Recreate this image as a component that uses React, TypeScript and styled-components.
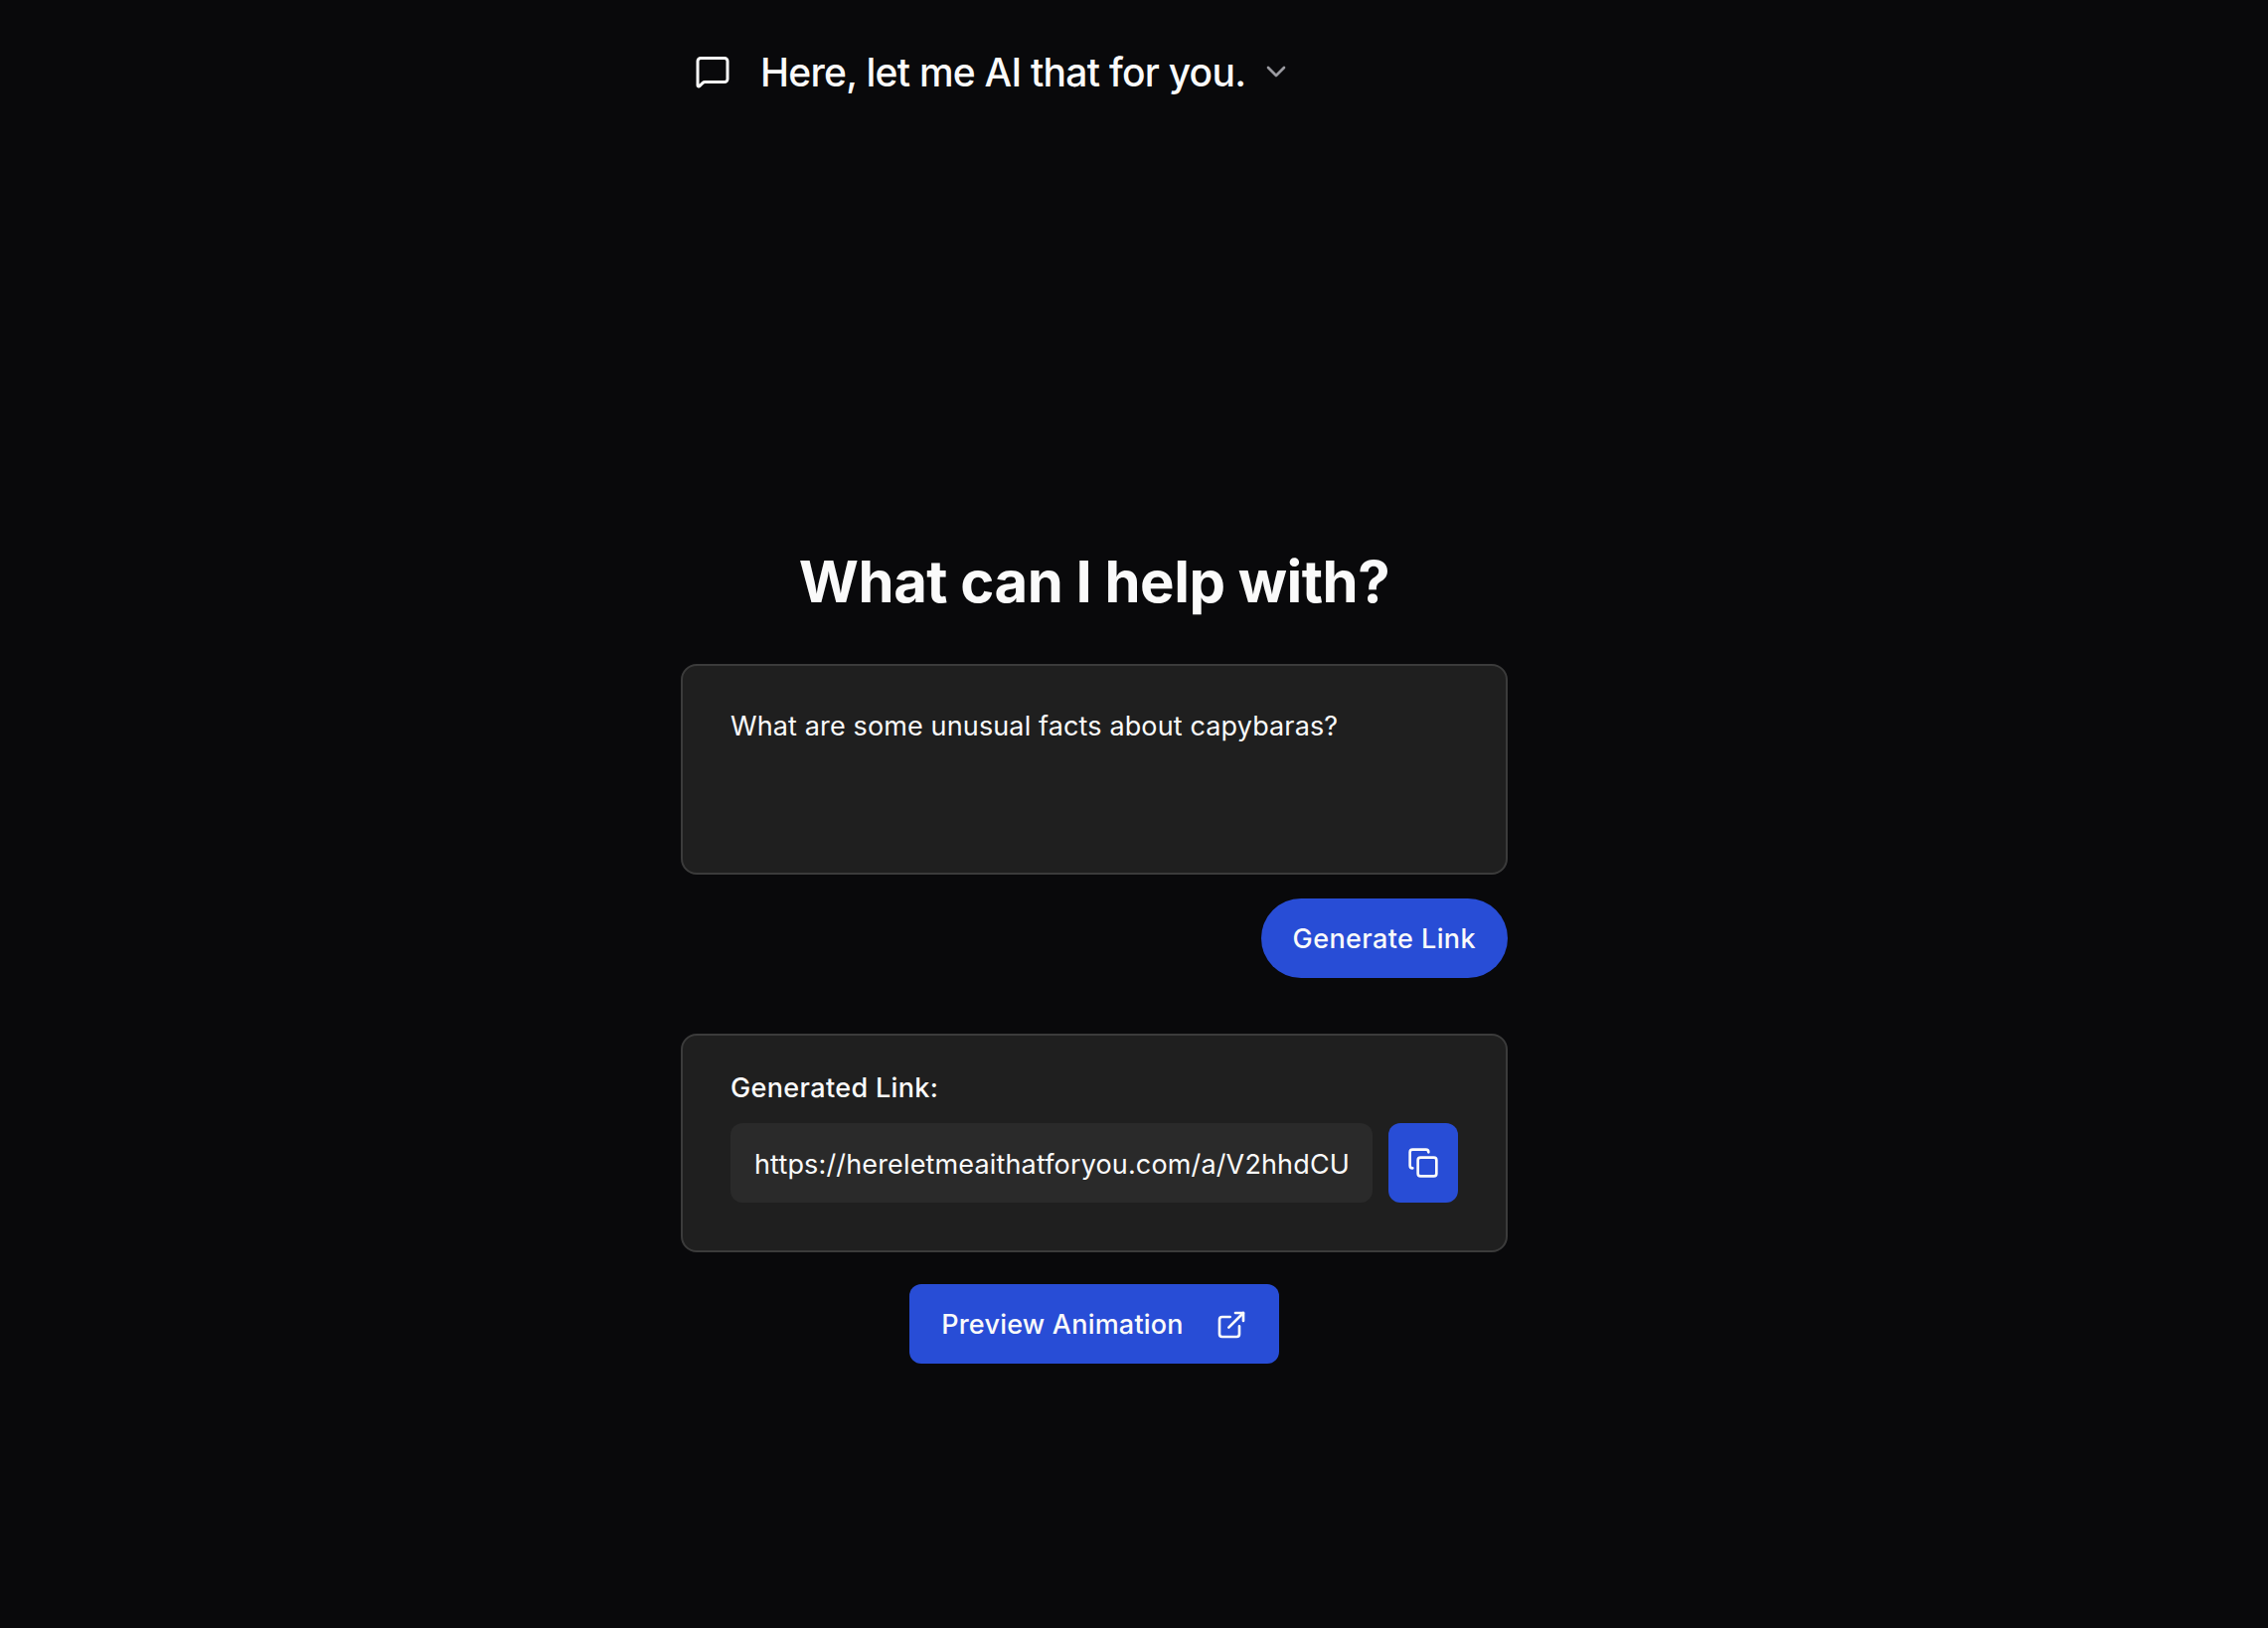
import React from "react";
import styled, { createGlobalStyle } from "styled-components";
import { MessageSquare, ChevronDown, Copy, ExternalLink } from "lucide-react";

const Global = createGlobalStyle`
  html, body { margin: 0; padding: 0; background: #09090b; }
  * { box-sizing: border-box; }
  body { font-family: Inter, "Liberation Sans", sans-serif; color: #fafafa; }
`;

const Page = styled.div`
  width: 2282px;
  height: 1638px;
  padding-right: 80px;
  display: flex;
  flex-direction: column;
  align-items: center;
  background: #09090b;
  overflow: hidden;
`;

const Column = styled.main`
  width: 832px;
  display: flex;
  flex-direction: column;
`;

const Header = styled.header`
  display: flex;
  align-items: center;
  height: 144px;
  padding-left: 14px;
  color: #fafafa;
`;

const TitleText = styled.span`
  font-size: 39px;
  font-weight: 450;
  letter-spacing: -0.75px;
  margin-left: 30px;
  margin-right: 15px;
  padding-top: 1px;
  line-height: 56px;
`;

const Heading = styled.h1`
  margin: 405px 0 0;
  text-align: center;
  font-size: 58px;
  line-height: 72px;
  font-weight: 700;
  letter-spacing: -0.5px;
  color: #fafafa;
  height: 119px;
`;

const Card = styled.div`
  background: #1f1f1f;
  border: 2px solid #3b3b3b;
  border-radius: 16px;
`;

const PromptCard = styled(Card)`
  height: 212px;
  padding: 41px 48px 0;
`;

const PromptInput = styled.textarea`
  display: block;
  width: 100%;
  height: 120px;
  background: transparent;
  border: 0;
  padding: 0;
  resize: none;
  outline: none;
  color: #fafafa;
  font: 400 27px/40px Inter, sans-serif;
  letter-spacing: 0.13px;
`;

const Actions = styled.div`
  display: flex;
  justify-content: flex-end;
  margin-top: 24px;
`;

const Button = styled.button<{ $pill?: boolean }>`
  height: 80px;
  display: inline-flex;
  align-items: center;
  justify-content: center;
  border: 0;
  background: #284dd6;
  color: #fafafa;
  padding: 1px 32px 0;
  border-radius: ${(p) => (p.$pill ? "40px" : "12px")};
  font: 500 27px/40px Inter, sans-serif;
  letter-spacing: ${(p) => (p.$pill ? "0.4px" : "0.22px")};
`;

const LinkCard = styled(Card)`
  margin-top: 56px;
  height: 220px;
  padding: 33px 48px 0;
`;

const Label = styled.div`
  font-size: 27px;
  font-weight: 500;
  letter-spacing: 0.35px;
  line-height: 40px;
  margin-bottom: 15px;
`;

const LinkRow = styled.div`
  display: flex;
  gap: 16px;
`;

const LinkInput = styled.input`
  width: 646px;
  height: 80px;
  background: #2a2a2a;
  border: 0;
  border-radius: 12px;
  padding: 2px 24px 0;
  outline: none;
  color: #fafafa;
  font: 400 27px/40px Inter, sans-serif;
  letter-spacing: 0.15px;
`;

const CopyButton = styled.button`
  width: 70px;
  height: 80px;
  border: 0;
  border-radius: 12px;
  background: #284dd6;
  color: #fafafa;
  display: flex;
  align-items: center;
  justify-content: center;
  padding: 0;
`;

const Center = styled.div`
  display: flex;
  justify-content: center;
  margin-top: 32px;
`;

const PreviewLabel = styled.span`
  margin-right: 32px;
`;

export default function App() {
  return (
    <>
      <Global />
      <Page>
        <Column>
          <Header>
            <MessageSquare size={36} strokeWidth={2} />
            <TitleText>Here, let me AI that for you.</TitleText>
            <ChevronDown size={32} color="#9a9aa0" />
          </Header>
          <Heading>What can I help with?</Heading>
          <PromptCard>
            <PromptInput readOnly value="What are some unusual facts about capybaras?" />
          </PromptCard>
          <Actions>
            <Button $pill>Generate Link</Button>
          </Actions>
          <LinkCard>
            <Label>Generated Link:</Label>
            <LinkRow>
              <LinkInput readOnly value="https://hereletmeaithatforyou.com/a/V2hhdCUyMGFyZSUyMHNvbWU" />
              <CopyButton aria-label="Copy"><Copy size={32} /></CopyButton>
            </LinkRow>
          </LinkCard>
          <Center>
            <Button>
              <PreviewLabel>Preview Animation</PreviewLabel>
              <ExternalLink size={32} />
            </Button>
          </Center>
        </Column>
      </Page>
    </>
  );
}
